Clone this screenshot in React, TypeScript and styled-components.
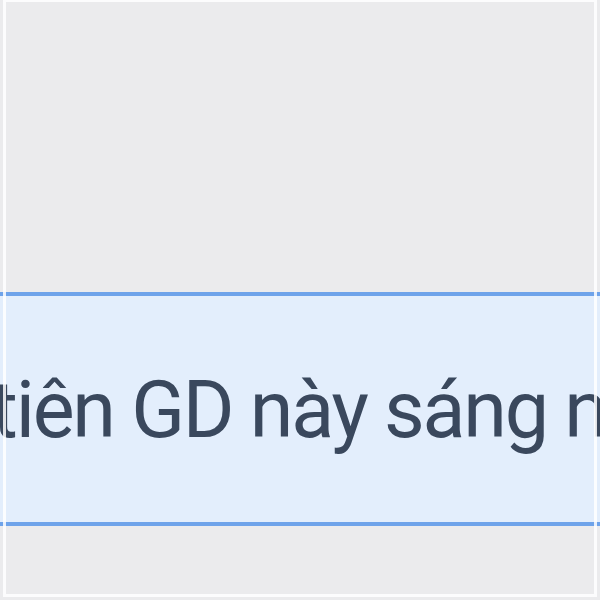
import React from "react";
import styled, { createGlobalStyle } from "styled-components";

const GlobalStyle = createGlobalStyle`
  html, body {
    margin: 0;
    padding: 0;
    background: #ebebed;
    overflow: hidden;
  }
`;

const Frame = styled.div`
  position: relative;
  width: 600px;
  height: 600px;
  overflow: hidden;
  background: #ebebed;
  display: flex;
  flex-direction: column;

  &::after {
    content: "";
    position: absolute;
    left: 3px;
    top: 0;
    width: 588px;
    height: 592px;
    border: 3px solid rgba(255, 255, 255, 0.85);
    border-top-width: 2px;
    pointer-events: none;
  }
`;

const Spacer = styled.div<{ h: number }>`
  height: ${({ h }) => h}px;
  flex-shrink: 0;
`;

const Banner = styled.div`
  height: 226px;
  flex-shrink: 0;
  background: #e3eefc;
  border-top: 4px solid #6ea3ea;
  border-bottom: 4px solid #6ea3ea;
  display: flex;
  align-items: center;
  overflow: hidden;
`;

const BannerText = styled.span`
  font-family: Roboto, "Noto Sans", sans-serif;
  font-size: 79px;
  letter-spacing: -2.2px;
  color: #3a485d;
  white-space: nowrap;
  margin-left: -8px;
  margin-top: 2px;
`;

export default function App() {
  return (
    <>
      <GlobalStyle />
      <Frame>
        <Spacer h={292} />
        <Banner>
          <BannerText>tiên GD này sáng nay</BannerText>
        </Banner>
      </Frame>
    </>
  );
}
